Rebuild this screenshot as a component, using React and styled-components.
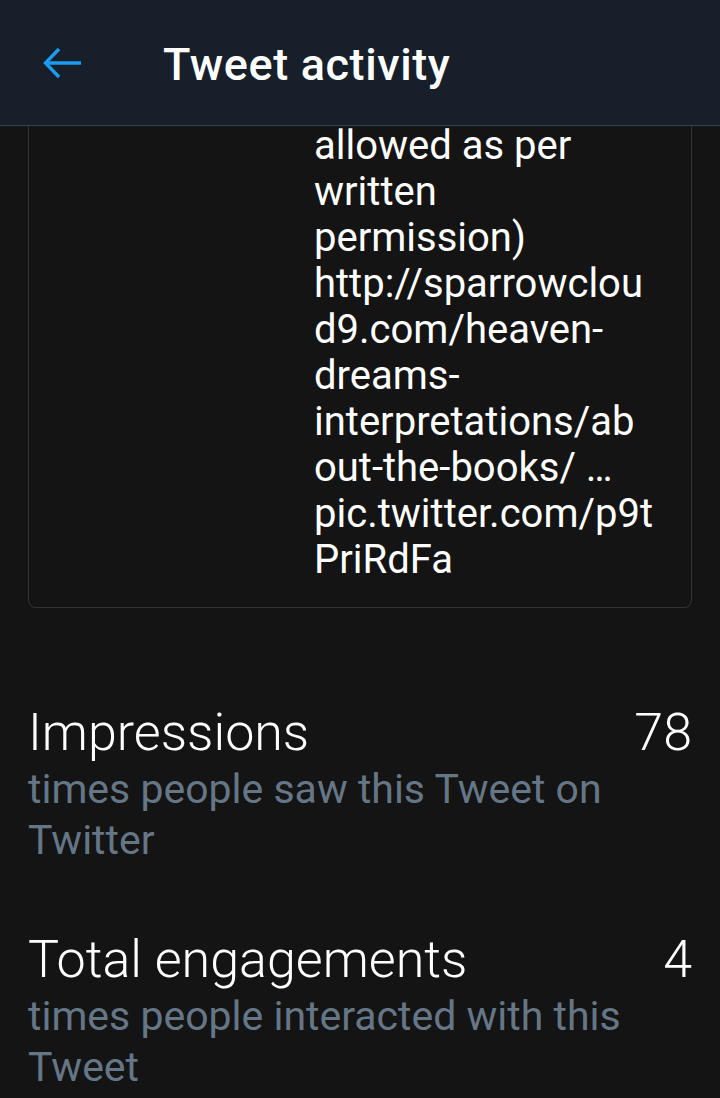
import React from "react";
import styled, { createGlobalStyle } from "styled-components";

const Global = createGlobalStyle`
  html, body {
    margin: 0;
    padding: 0;
    background: #141414;
  }
  body {
    font-family: Roboto, "Noto Sans", sans-serif;
    color: #ffffff;
    overflow: hidden;
  }
`;

const Page = styled.div`
  width: 720px;
  height: 1098px;
  display: flex;
  flex-direction: column;
  background: #141414;
  overflow: hidden;
`;

const Header = styled.header`
  height: 126px;
  flex-shrink: 0;
  display: flex;
  align-items: center;
  background: #17202a;
  border-bottom: 1px solid #38444d;
  box-sizing: border-box;
`;

const BackButton = styled.button`
  width: 163px;
  height: 100%;
  padding: 0 0 0 42px;
  display: flex;
  align-items: center;
  background: none;
  border: none;
  color: #1d9bf0;
`;

const Title = styled.h1`
  margin: 4px 0 0;
  font-size: 45px;
  font-weight: 500;
  letter-spacing: 0.6px;
  color: #ffffff;
`;

const Content = styled.main`
  padding: 0 28px;
  display: flex;
  flex-direction: column;
`;

const TweetCard = styled.section`
  display: grid;
  grid-template-columns: 285px 1fr;
  border: 1px solid #2f3336;
  border-top: none;
  border-radius: 0 0 8px 8px;
  padding: 0 0 24px;
`;

const TweetText = styled.p`
  grid-column: 2;
  margin: -3px 0 0;
  font-size: 40px;
  line-height: 46px;
  color: #ffffff;
`;

const Line = styled.span`
  display: block;
  white-space: nowrap;
`;

const Stat = styled.div`
  margin-top: ${(p) => p.$top}px;
`;

const StatHead = styled.div`
  display: flex;
  justify-content: space-between;
  align-items: baseline;
  font-size: 52px;
  font-weight: 300;
  line-height: 60px;
`;

const StatNote = styled.div`
  margin-top: 1px;
  font-size: 41px;
  line-height: 51px;
  color: #657786;
`;

const ArrowIcon = () => (
  <svg width="40" height="34" viewBox="0 0 40 34" fill="none" stroke="currentColor" strokeWidth="3.4" strokeLinecap="butt">
    <path d="M39 17H4" />
    <path d="M17 3L3.5 17L17 31" />
  </svg>
);

const tweetLines = [
  "allowed as per",
  "written",
  "permission)",
  "http://sparrowclou",
  "d9.com/heaven-",
  "dreams-",
  "interpretations/ab",
  "out-the-books/ …",
  "pic.twitter.com/p9t",
  "PriRdFa",
];

const stats = [
  { label: "Impressions", value: "78", note: ["times people saw this Tweet on", "Twitter"], top: 95 },
  { label: "Total engagements", value: "4", note: ["times people interacted with this", "Tweet"], top: 64 },
];

export default function App() {
  return (
    <>
      <Global />
      <Page>
        <Header>
          <BackButton aria-label="Back">
            <ArrowIcon />
          </BackButton>
          <Title>Tweet activity</Title>
        </Header>
        <Content>
          <TweetCard>
            <TweetText>
              {tweetLines.map((l) => (
                <Line key={l}>{l}</Line>
              ))}
            </TweetText>
          </TweetCard>
          {stats.map((s) => (
            <Stat key={s.label} $top={s.top}>
              <StatHead>
                <span>{s.label}</span>
                <span>{s.value}</span>
              </StatHead>
              <StatNote>
                {s.note.map((n) => (
                  <Line key={n}>{n}</Line>
                ))}
              </StatNote>
            </Stat>
          ))}
        </Content>
      </Page>
    </>
  );
}
